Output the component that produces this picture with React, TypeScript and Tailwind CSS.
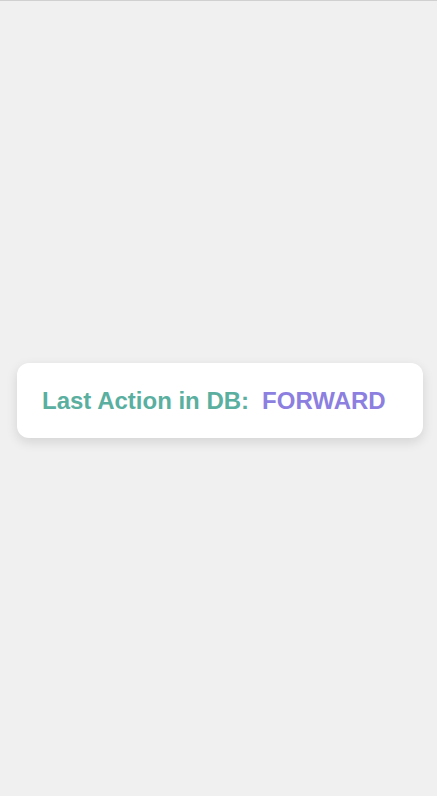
export default function App() {
  return (
    <div className="min-h-[796px] w-full bg-[#f0f0f0] border-t border-[#d0d0d0] pt-[4px] flex items-center font-['Liberation_Sans',Arial,sans-serif]">
      <div className="ml-[17px] w-[406px] h-[75px] rounded-xl bg-white shadow-[0_4px_12px_rgba(0,0,0,0.12)] flex items-center pl-[25px]">
        <span className="text-[24px] font-bold text-[#5aaf9f]">Last Action in DB:</span>
        <span className="ml-[13px] text-[24px] font-bold text-[#8c7fe0]">FORWARD</span>
      </div>
    </div>
  );
}
